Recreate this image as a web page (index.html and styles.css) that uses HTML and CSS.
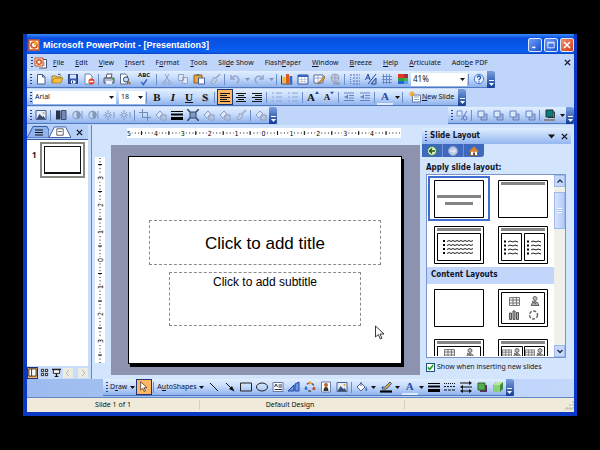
FILE: index.html
```html
<!DOCTYPE html>
<html lang="en">
<head>
<meta charset="utf-8">
<title>Microsoft PowerPoint - [Presentation3]</title>
<link rel="stylesheet" href="styles.css">
</head>
<body>
<svg class="defs" aria-hidden="true">
  <defs>
    <symbol id="new" viewBox="0 0 12 12"><path d="M2.5 1.500h5l2.500 2.500v7h-7.500z" fill="#fff" stroke="#4a5f91"/><path d="M7.500 1.500v2.500h2.500" fill="none" stroke="#4a5f91"/></symbol>
    <symbol id="open" viewBox="0 0 12 12"><path d="M1 10V3h4l1 1h4v2" fill="#f5d778" stroke="#a07a20"/><path d="M1 10l2-5h9l-2.500 5z" fill="#ffbf3d" stroke="#a07a20" stroke-width=".8"/><path d="M7 1.500q2-1 3 1" fill="none" stroke="#345"/></symbol>
    <symbol id="save" viewBox="0 0 12 12"><path d="M1.500 1.500h9v9h-9z" fill="#3b5cad" stroke="#223c80"/><path d="M3 1.500h6v4H3z" fill="#d8e4ff"/><path d="M4 7.500h4.500v3H4z" fill="#fff"/><path d="M5 8h1v2H5z" fill="#223c80"/></symbol>
    <symbol id="perm" viewBox="0 0 12 12"><path d="M2 1h5l2 2v8H2z" fill="#fff" stroke="#7084b0"/><circle cx="8.500" cy="8.500" r="3" fill="#e2401c"/><path d="M6.500 8.500h4" stroke="#fff" stroke-width="1.400"/></symbol>
    <symbol id="print" viewBox="0 0 12 12"><path d="M4 1h5l-1 4H3z" fill="#fff" stroke="#556"/><path d="M1 5h10v5H1z" fill="#b3bdcb" stroke="#4b5366"/><path d="M3 8h6v3H3z" fill="#eef"/><path d="M9 6.500h1.500" stroke="#2b2"/></symbol>
    <symbol id="preview" viewBox="0 0 12 12"><path d="M1.500 1h5l2 2v8h-7z" fill="#fff" stroke="#566a99"/><circle cx="7" cy="6.500" r="2.600" fill="#bfe0ff" stroke="#345"/><path d="M9 8.500l2.500 2.700" stroke="#a06a30" stroke-width="1.800"/></symbol>
    <symbol id="check" viewBox="0 0 12 12"><path d="M2 6l3 4L10.500 2" fill="none" stroke="#2b58c0" stroke-width="1.900"/></symbol>
    <symbol id="cut" viewBox="0 0 12 12"><path d="M4 1l4 7M8 1L4 8" stroke="#93a3c5"/><circle cx="3.500" cy="9.500" r="1.600" fill="none" stroke="#93a3c5"/><circle cx="8.500" cy="9.500" r="1.600" fill="none" stroke="#93a3c5"/></symbol>
    <symbol id="copy" viewBox="0 0 12 12"><path d="M1.500 1.500h5v6h-5zM5.500 4.500h5v6h-5z" fill="#dfe7f5" stroke="#94a4c6"/></symbol>
    <symbol id="paste" viewBox="0 0 12 12"><path d="M1 2h8v8H1z" fill="#e6a93b" stroke="#8a6420"/><path d="M3.500 1h3v2h-3z" fill="#777"/><path d="M5.500 5h6v6h-6z" fill="#fff" stroke="#44609c"/></symbol>
    <symbol id="brush" viewBox="0 0 12 12"><path d="M11 1L7 5" stroke="#95a4c2" stroke-width="1.500"/><path d="M5 4l3 3-4 4-2-1z" fill="#c4cfe2" stroke="#95a4c2"/></symbol>
    <symbol id="undo" viewBox="0 0 12 12"><path d="M2 2v4h4M2.500 5.500q4-5 7 0 1 3-2 5" fill="none" stroke="#93a5cc" stroke-width="1.500"/></symbol>
    <symbol id="redo" viewBox="0 0 12 12"><path d="M10 2v4H6M9.500 5.500q-4-5-7 0-1 3 2 5" fill="none" stroke="#93a5cc" stroke-width="1.500"/></symbol>
    <symbol id="down" viewBox="0 0 5 5"><path d="M0 1h5L2.500 4z" fill="currentColor"/></symbol>
    <symbol id="cap" viewBox="0 0 5 6"><path d="M0 .5h5" stroke="currentColor"/><path d="M0 3h5L2.500 6z" fill="currentColor"/></symbol>
    <symbol id="chart" viewBox="0 0 12 12"><path d="M.5 2.500v8.500h11" fill="none" stroke="#345"/><path d="M1.500 4h3v6.500h-3z" fill="#f0b52d"/><path d="M5 1h3v9.500H5z" fill="#dd5a1d"/><path d="M8.500 3h2.700v7.500H8.500z" fill="#3264c4"/></symbol>
    <symbol id="table" viewBox="0 0 12 12"><path d="M1 2h10v9H1z" fill="#fff" stroke="#334f8d"/><path d="M1 2h10v2H1z" fill="#3465c0"/><path d="M4.500 4v7M7.700 4v7M1 6.500h10M1 8.700h10" stroke="#a9b9dc" stroke-width=".7"/></symbol>
    <symbol id="drawtable" viewBox="0 0 12 12"><path d="M1 2h9v8H1z" fill="#fff" stroke="#566b99"/><path d="M1 5h9M5 2v8" stroke="#98a8cc"/><path d="M11.500 3L6 9l-1 2 2-1 5-5z" fill="#f0a830" stroke="#704d20" stroke-width=".6"/></symbol>
    <symbol id="link" viewBox="0 0 12 12"><circle cx="6" cy="5" r="4" fill="#c1cce0" stroke="#94a3bf"/><path d="M2 5h8M6 1v8" stroke="#94a3bf"/><path d="M4 10.500h7" stroke="#8b99b5" stroke-width="2"/></symbol>
    <symbol id="expand" viewBox="0 0 12 12"><path d="M1 2h10M4 5h7M4 8h7M4 11h7" stroke="#4e6fb7" stroke-dasharray="2 1"/><path d="M1.500 4v7" stroke="#4e6fb7" stroke-dasharray="1 1"/></symbol>
    <symbol id="fmt" viewBox="0 0 12 12"><path d="M.5 7L3 1l2 6M1.500 5h3" fill="none" stroke="#26489a"/><path d="M11 1L3 11" stroke="#26489a"/><path d="M6 11l5-6v6z" fill="#9eb5e0" stroke="#26489a"/></symbol>
    <symbol id="gridi" viewBox="0 0 12 12"><path d="M2.500 1v10M5.500 1v10M8.500 1v10M1 3.500h10M1 6.500h10M1 9.500h10" stroke="#6484c4" stroke-width=".9"/></symbol>
    <symbol id="color" viewBox="0 0 12 12"><path d="M1 1h10v10H1z" fill="#243a70"/><path d="M1 1h6v4H1z" fill="#e5381f"/><path d="M1 5h6v3H1z" fill="#24a33c"/><path d="M1 8h6v3H1z" fill="#2767d8"/><path d="M7 1h4v4H7z" fill="#a32f38"/><path d="M7 5h4v3H7z" fill="#4bb04a"/><path d="M7 8h4v3H7z" fill="#51a3ee"/></symbol>
    <symbol id="help" viewBox="0 0 12 12"><circle cx="6" cy="6" r="4.700" fill="#e5f0ff" stroke="#4878ce"/><path d="M4.300 4.700Q4.500 3 6 3t1.700 1.500Q7.700 5.500 6 6.500v.8M6 8.200v1.200" fill="none" stroke="#2355b8" stroke-width="1.300"/></symbol>
    <symbol id="al" viewBox="0 0 12 12"><path d="M1 2.500h10M1 4.500h7M1 6.500h10M1 8.500h7M1 10.500h10" stroke="#111"/></symbol>
    <symbol id="ac" viewBox="0 0 12 12"><path d="M1 2.500h10M3 4.500h6M1 6.500h10M3 8.500h6M1 10.500h10" stroke="#111"/></symbol>
    <symbol id="ar" viewBox="0 0 12 12"><path d="M1 2.500h10M4 4.500h7M1 6.500h10M4 8.500h7M1 10.500h10" stroke="#111"/></symbol>
    <symbol id="list" viewBox="0 0 12 12"><path d="M1 2h2M1 6h2M1 10h2M5 2h6M5 6h6M5 10h6" stroke="#8da5d4"/></symbol>
    <symbol id="indent" viewBox="0 0 12 12"><path d="M1 2h10M6 4.500h5M6 7h5M1 9.500h10" stroke="#6585c5"/><path d="M5 3.500L1 6l4 2z" fill="#6585c5"/></symbol>
    <symbol id="up" viewBox="0 0 4 4"><path d="M0 3h4L2 0z" fill="#2c4f9f"/></symbol>
    <symbol id="slideadd" viewBox="0 0 12 12"><path d="M3.500 4h8v7h-8z" fill="#fff" stroke="#5c75ad"/><path d="M5 6h5M5 8.500h5" stroke="#8aa"/><path d="M3 0v6M0 3h6M1 1l4 4M5 1L1 5" stroke="#f2a41f"/></symbol>
    <symbol id="pic" viewBox="0 0 12 12"><path d="M1 1.500h10v9H1z" fill="#e4eeff" stroke="#4b628f"/><path d="M1.500 10l3-5 3 3 1-1 2 3z" fill="#3c4f70"/><circle cx="8.500" cy="4" r="1" fill="#e69b2b"/></symbol>
    <symbol id="half" viewBox="0 0 12 12"><path d="M1 1.500h4.500v9H1z" fill="#26324f"/><path d="M6.500 1.500H11v9H6.500z" fill="#778bb5" stroke="#3a4d78"/></symbol>
    <symbol id="contrast" viewBox="0 0 12 12"><circle cx="5.500" cy="6" r="3.800" fill="#c9d6ec" stroke="#8198c0"/><path d="M5.500 2a4 4 0 010 8z" fill="#8198c0"/><path d="M11 2v8" stroke="#8198c0"/></symbol>
    <symbol id="sun" viewBox="0 0 12 12"><circle cx="5" cy="6" r="2" fill="none" stroke="#8198c0"/><path d="M5 1v2M5 9v2M.5 6h2M7 6h2M2 3l1 1M7 8l1 1M8 3L7 4M2 9l1-1M11 3v6" stroke="#8198c0"/></symbol>
    <symbol id="crop" viewBox="0 0 12 12"><path d="M3.500 0v8.500H12M0 3.500h8.500V12" fill="none" stroke="#7188b8"/></symbol>
    <symbol id="shape" viewBox="0 0 12 12"><path d="M1 6l4-4 3 3-4 4z" fill="#dde7f6" stroke="#8c9fc3"/><path d="M6 6h5v5H6z" fill="#b8c7df" stroke="#8c9fc3"/></symbol>
    <symbol id="thick" viewBox="0 0 12 12"><path d="M0 2.500h12" stroke="#000"/><path d="M0 5.500h12" stroke="#000" stroke-width="2"/><path d="M0 9.500h12" stroke="#000" stroke-width="3"/></symbol>
    <symbol id="compress" viewBox="0 0 12 12"><path d="M3 3h6v6H3z" fill="#8298c4" stroke="#33466f"/><path d="M0 0l3 3M12 0L9 3M0 12l3-3M12 12L9 9" stroke="#33466f" stroke-width="1.500"/></symbol>
    <symbol id="anim" viewBox="0 0 12 12"><path d="M1 2h5v5H1z" fill="#dfe9fb" stroke="#7a93c6"/><path d="M11 2L5 11" stroke="#5d7aba"/><circle cx="9" cy="9" r="2" fill="none" stroke="#5d7aba"/></symbol>
    <symbol id="order" viewBox="0 0 12 12"><path d="M5 5h6v6H5z" fill="#9db4de" stroke="#6582bd"/><path d="M2 2h6v6H2z" fill="#dbe7fb" stroke="#6582bd"/></symbol>
    <symbol id="teal" viewBox="0 0 12 12"><path d="M2 1h7v7H2z" fill="#087f7b" stroke="#233"/><path d="M9 3h1.500v5.500H4" fill="none" stroke="#333"/><path d="M0 11h11" stroke="#888" stroke-width="2"/></symbol>
    <symbol id="pointer" viewBox="0 0 12 16"><path d="M1.500 1v11l2.800-2.500 2 4.500 1.700-.8-2-4.200H10z" fill="#fff" stroke="#222" stroke-width=".9"/></symbol>
    <symbol id="line" viewBox="0 0 12 12"><path d="M2 2l8 8" stroke="#111"/></symbol>
    <symbol id="arrow" viewBox="0 0 12 12"><path d="M2 2l6 6" stroke="#111"/><path d="M10.500 10.500L5 8l3-3z" fill="#111"/></symbol>
    <symbol id="rect" viewBox="0 0 12 12"><path d="M.5 2h11v8H.5z" fill="none" stroke="#222"/></symbol>
    <symbol id="oval" viewBox="0 0 12 12"><ellipse cx="6" cy="6" rx="5.500" ry="4" fill="none" stroke="#222"/></symbol>
    <symbol id="tbox" viewBox="0 0 12 12"><path d="M1 1.500h10v9H1z" fill="#fff" stroke="#667ba8"/><path d="M2.500 6L4 3l1.500 3M6.500 4H10M6.500 6H10M2.500 8.500H10" fill="none" stroke="#334"/></symbol>
    <symbol id="wordart" viewBox="0 0 12 12"><path d="M0 10L6 4v6zM7 10V3l4-2v9z" fill="#6d98e8" stroke="#1f479f"/></symbol>
    <symbol id="diagram" viewBox="0 0 12 12"><circle cx="6" cy="6" r="4" fill="none" stroke="#555" stroke-dasharray="3 2" stroke-width="1.400"/><circle cx="6" cy="1.800" r="1.600" fill="#f1a22b"/><circle cx="2" cy="7.500" r="1.500" fill="#3d72d6"/><circle cx="10" cy="7.500" r="1.500" fill="#d14a26"/></symbol>
    <symbol id="clip" viewBox="0 0 12 12"><path d="M1.500 1h9v10h-9z" fill="#fff" stroke="#667ba8"/><circle cx="6" cy="4" r="2" fill="#b76523"/><path d="M3.500 10q0-4 2.500-4t2.500 4z" fill="#333"/></symbol>
    <symbol id="bucket" viewBox="0 0 12 12"><path d="M1 6l4-4 4 4-4 4z" fill="#fff" stroke="#4c6390"/><path d="M5 5V1" stroke="#4c6390"/><path d="M10 5q2 3 1 4.500t-2-.5z" fill="#5478b5"/></symbol>
    <symbol id="pen" viewBox="0 0 12 12"><path d="M2 6q3 1 4-1l4-4 1.500 1.500-4 4.500q-2 2-5 1z" fill="#eaaa36" stroke="#35558f"/><path d="M0 10.500h12" stroke="#000" stroke-width="2.200"/></symbol>
    <symbol id="dash" viewBox="0 0 12 12"><path d="M0 2.500h12" stroke="#111" stroke-dasharray="1 1"/><path d="M0 5.500h12" stroke="#111" stroke-dasharray="2 1"/><path d="M0 9h12" stroke="#111" stroke-dasharray="3 1"/></symbol>
    <symbol id="arrows" viewBox="0 0 12 12"><path d="M0 2h10M2 6h10M1 10h10" stroke="#111"/><path d="M9 0l3 2-3 2zM3 4L0 6l3 2zM3 8l-3 2 3 2zM9 8l3 2-3 2z" fill="#111"/></symbol>
    <symbol id="shadow" viewBox="0 0 12 12"><path d="M4 4h7v7H4z" fill="#536"/><path d="M2 2h7v7H2z" fill="#58ae4f" stroke="#2d672c"/></symbol>
    <symbol id="cube" viewBox="0 0 12 12"><path d="M1 4l3-3h7v7l-3 3H1z" fill="#3c8d3b"/><path d="M1 4h7v7H1z" fill="#8bd078"/><path d="M1 4l3-3h7L8 4z" fill="#bce8a4"/></symbol>
    <symbol id="x" viewBox="0 0 8 8"><path d="M1 1l6 6M7 1L1 7" stroke="currentColor" stroke-width="1.500"/></symbol>
    <symbol id="logo" viewBox="0 0 12 12"><path d="M1 1h10v10H1z" fill="#fff4e9" stroke="#d9541e" stroke-width="1.400"/><circle cx="6" cy="6" r="3" fill="none" stroke="#d9541e" stroke-width="1.700"/><path d="M6 6V2.500A3.500 3.500 0 019.500 6z" fill="#f5a12a"/></symbol>
    <symbol id="docicon" viewBox="0 0 14 12"><path d="M6 2.500h6.500v8.500H5" fill="#fff" stroke="#444f70"/><path d="M10 5v4" stroke="#8a96b5"/><path d="M1 1h8v8H1z" fill="#fff4e9" stroke="#c9481a"/><circle cx="5" cy="5" r="2.300" fill="none" stroke="#d9541e" stroke-width="1.500"/></symbol>

    <symbol id="t-title" viewBox="0 0 50 38"><path d="M.5.500h49v37H.5z" fill="#fff" stroke="#000"/><path d="M3 16.500h44M11 23.500h28" stroke="#858585" stroke-width="3"/></symbol>
    <symbol id="t-only" viewBox="0 0 50 38"><path d="M.5.500h49v37H.5z" fill="#fff" stroke="#000"/><path d="M3 3.500h44" stroke="#858585" stroke-width="3"/></symbol>
    <symbol id="t-blank" viewBox="0 0 50 38"><path d="M.5.500h49v37H.5z" fill="#fff" stroke="#000"/></symbol>
    <symbol id="t-text" viewBox="0 0 50 38"><use href="#t-only"/><path d="M3.500 7.500h43v27h-43z" fill="none" stroke="#000"/><path d="M9 15h2M9 19h2M9 23h2M9 27h2" stroke="#000" stroke-width="2"/><path d="M13 15.500l2-1 2 1 2-1 2 1 2-1 2 1 2-1 2 1 2-1 2 1 2-1 2 1 2-1M13 19.500l2-1 2 1 2-1 2 1 2-1 2 1 2-1 2 1 2-1 2 1 2-1 2 1 2-1M13 23.500l2-1 2 1 2-1 2 1 2-1 2 1 2-1 2 1 2-1 2 1 2-1 2 1 2-1M13 27.500l2-1 2 1 2-1 2 1 2-1 2 1 2-1 2 1 2-1 2 1 2-1 2 1 2-1" fill="none" stroke="#222"/></symbol>
    <symbol id="t-two" viewBox="0 0 50 38"><use href="#t-only"/><path d="M3.500 7.500h20v27h-20zM26.500 7.500h20v27h-20z" fill="none" stroke="#000"/><path d="M6 15.500h2M6 19.500h2M6 23.500h2M6 27.500h2M29 15.500h2M29 19.500h2M29 23.500h2M29 27.500h2" stroke="#000" stroke-width="2"/><path d="M10 16l2-1 3 1 2-1 3 1M10 20l2-1 3 1 2-1 3 1M10 24l2-1 3 1 2-1 3 1M10 28l2-1 3 1 2-1 3 1M33 16l2-1 3 1 2-1 3 1M33 20l2-1 3 1 2-1 3 1M33 24l2-1 3 1 2-1 3 1M33 28l2-1 3 1 2-1 3 1" fill="none" stroke="#222"/></symbol>
    <symbol id="g-table" viewBox="0 0 11 10"><path d="M.5.500h10v8H.5zM.5 3h10M.5 6h10M4 .5v8M7.500.500v8" fill="#f4f4f4" stroke="#777"/></symbol>
    <symbol id="g-man" viewBox="0 0 11 10"><circle cx="6" cy="2.500" r="2" fill="#bbb" stroke="#666"/><path d="M2 9.500q1-4 4-4t4 4z" fill="#aaa" stroke="#666"/><path d="M3 5l4 3" stroke="#555"/></symbol>
    <symbol id="g-bars" viewBox="0 0 11 10"><path d="M.5 3h2v6.500h-2zM4 1h2v8.500H4zM7.500 2.500h2v7h-2z" fill="#aaa" stroke="#555"/></symbol>
    <symbol id="g-ring" viewBox="0 0 11 10"><circle cx="5.500" cy="5" r="4" fill="none" stroke="#666" stroke-width="1.500" stroke-dasharray="3 1.500"/></symbol>
    <symbol id="t-content" viewBox="0 0 50 38"><use href="#t-blank"/><path d="M3.500 3.500h43v31h-43z" fill="none" stroke="#000"/><use href="#g-table" x="11" y="8" width="11" height="10"/><use href="#g-man" x="31" y="7" width="11" height="10"/><use href="#g-bars" x="11" y="21" width="11" height="10"/><use href="#g-ring" x="30" y="21" width="11" height="10"/></symbol>
    <symbol id="t-tcontent" viewBox="0 0 50 38"><use href="#t-only"/><path d="M3.500 7.500h43v27h-43z" fill="none" stroke="#000"/><use href="#g-table" x="10" y="10" width="11" height="10"/><use href="#g-man" x="30" y="9" width="11" height="10"/></symbol>
    <symbol id="t-tcontent2" viewBox="0 0 50 38"><use href="#t-only"/><path d="M3.500 7.500h21v27h-21zM26.500 7.500h20v27h-20z" fill="none" stroke="#000"/><use href="#g-table" x="4" y="10" width="10" height="10"/><use href="#g-man" x="13" y="9" width="11" height="10"/><use href="#g-table" x="27" y="10" width="10" height="10"/><use href="#g-man" x="36" y="9" width="11" height="10"/></symbol>
  </defs>
</svg>

<div class="window">
  <header class="titlebar">
    <svg class="i"><use href="#logo"/></svg>
    <h1>Microsoft PowerPoint - [Presentation3]</h1>
    <button class="winbtn" aria-label="Minimize"><svg viewBox="0 0 10 10"><path d="M1.500 8h4" stroke="#fff" stroke-width="2"/></svg></button>
    <button class="winbtn" aria-label="Restore"><svg viewBox="0 0 10 10"><path d="M1 1.500h8v7H1zM1 2.500h8" fill="none" stroke="#fff"/></svg></button>
    <button class="winbtn close" aria-label="Close"><svg viewBox="0 0 8 8"><use href="#x"/></svg></button>
  </header>

  <nav class="menubar">
    <span class="grip"></span>
    <svg class="doc"><use href="#docicon"/></svg>
    <a href="#"><u>F</u>ile</a><a href="#"><u>E</u>dit</a><a href="#"><u>V</u>iew</a><a href="#"><u>I</u>nsert</a><a href="#">F<u>o</u>rmat</a><a href="#"><u>T</u>ools</a><a href="#">Sli<u>d</u>e Show</a><a href="#">Flash<u>P</u>aper</a><a href="#"><u>W</u>indow</a><a href="#"><u>B</u>reeze</a><a href="#"><u>H</u>elp</a><a href="#"><u>A</u>rticulate</a><a href="#">Ado<u>b</u>e PDF</a>
    <button class="mdi" aria-label="Close presentation"><svg class="x"><use href="#x"/></svg></button>
  </nav>

  <div class="row">
    <div class="toolbar">
      <span class="grip"></span>
      <button class="b" aria-label="New"><svg class="i"><use href="#new"/></svg></button>
      <button class="b" aria-label="Open"><svg class="i"><use href="#open"/></svg></button>
      <button class="b" aria-label="Save"><svg class="i"><use href="#save"/></svg></button>
      <button class="b" aria-label="Permission"><svg class="i"><use href="#perm"/></svg></button>
      <span class="sep"></span>
      <button class="b" aria-label="Print"><svg class="i"><use href="#print"/></svg></button>
      <button class="b" aria-label="Print Preview"><svg class="i"><use href="#preview"/></svg></button>
      <button class="b spell" aria-label="Spelling"><span>ABC</span><svg class="i"><use href="#check"/></svg></button>
      <span class="sep"></span>
      <button class="b" aria-label="Cut"><svg class="i"><use href="#cut"/></svg></button>
      <button class="b" aria-label="Copy"><svg class="i"><use href="#copy"/></svg></button>
      <button class="b" aria-label="Paste"><svg class="i"><use href="#paste"/></svg></button>
      <button class="b" aria-label="Format Painter"><svg class="i"><use href="#brush"/></svg></button>
      <span class="sep"></span>
      <button class="b" aria-label="Undo"><svg class="i"><use href="#undo"/></svg></button>
      <button class="d off" aria-label="Undo list"><svg><use href="#down"/></svg></button>
      <button class="b" aria-label="Redo"><svg class="i"><use href="#redo"/></svg></button>
      <button class="d off" aria-label="Redo list"><svg><use href="#down"/></svg></button>
      <span class="sep"></span>
      <button class="b" aria-label="Chart"><svg class="i"><use href="#chart"/></svg></button>
      <button class="b" aria-label="Table"><svg class="i"><use href="#table"/></svg></button>
      <button class="b" aria-label="Draw Table"><svg class="i"><use href="#drawtable"/></svg></button>
      <button class="b" aria-label="Hyperlink"><svg class="i"><use href="#link"/></svg></button>
      <span class="sep"></span>
      <button class="b" aria-label="Expand All"><svg class="i"><use href="#expand"/></svg></button>
      <button class="b" aria-label="Show Formatting"><svg class="i"><use href="#fmt"/></svg></button>
      <button class="b" aria-label="Grid"><svg class="i"><use href="#gridi"/></svg></button>
      <button class="b" aria-label="Color"><svg class="i"><use href="#color"/></svg></button>
      <span class="combo zoom"><select aria-label="Zoom"><option>41%</option></select><svg><use href="#down"/></svg></span>
      <span class="sep"></span>
      <button class="b" aria-label="Help"><svg class="i"><use href="#help"/></svg></button>
      <button class="cap" aria-label="Toolbar Options"><svg><use href="#cap"/></svg></button>
    </div>
  </div>

  <div class="row">
    <div class="toolbar">
      <span class="grip"></span>
      <span class="combo font"><select aria-label="Font"><option>Arial</option></select><svg><use href="#down"/></svg></span>
      <span class="combo size"><select aria-label="Font Size"><option>18</option></select><svg><use href="#down"/></svg></span>
      <span class="sep"></span>
      <button class="b ch">B</button><button class="b ch it">I</button><button class="b ch un">U</button><button class="b ch sh">S</button>
      <span class="sep"></span>
      <button class="b on" aria-label="Align Left"><svg class="i"><use href="#al"/></svg></button>
      <button class="b" aria-label="Center"><svg class="i"><use href="#ac"/></svg></button>
      <button class="b" aria-label="Align Right"><svg class="i"><use href="#ar"/></svg></button>
      <span class="sep"></span>
      <button class="b" aria-label="Numbering"><svg class="i"><use href="#list"/></svg></button>
      <button class="b" aria-label="Bullets"><svg class="i"><use href="#list"/></svg></button>
      <span class="sep"></span>
      <button class="b ch">A<svg class="mark"><use href="#up"/></svg></button>
      <button class="b ch small">A<svg class="mark"><use href="#down"/></svg></button>
      <span class="sep"></span>
      <button class="b" aria-label="Decrease Indent"><svg class="i"><use href="#indent"/></svg></button>
      <button class="b" aria-label="Increase Indent"><svg class="i"><use href="#indent"/></svg></button>
      <span class="sep"></span>
      <button class="b ch fc">A</button>
      <button class="d" aria-label="Font colors"><svg><use href="#down"/></svg></button>
      <span class="sep"></span>
      <button class="textbtn wide"><svg class="i"><use href="#slideadd"/></svg><span><u>N</u>ew Slide</span></button>
      <button class="cap" aria-label="Toolbar Options"><svg><use href="#cap"/></svg></button>
    </div>
  </div>

  <div class="row">
    <div class="toolbar">
      <span class="grip"></span>
      <button class="b" aria-label="Insert Picture"><svg class="i"><use href="#pic"/></svg></button>
      <span class="sep"></span>
      <button class="b" aria-label="Picture Color"><svg class="i"><use href="#half"/></svg></button>
      <button class="b" aria-label="More Contrast"><svg class="i"><use href="#contrast"/></svg></button>
      <button class="b" aria-label="Less Contrast"><svg class="i"><use href="#contrast"/></svg></button>
      <button class="b" aria-label="More Brightness"><svg class="i"><use href="#sun"/></svg></button>
      <button class="b" aria-label="Less Brightness"><svg class="i"><use href="#sun"/></svg></button>
      <span class="sep"></span>
      <button class="b" aria-label="Crop"><svg class="i"><use href="#crop"/></svg></button>
      <button class="b" aria-label="Rotate Left"><svg class="i"><use href="#shape"/></svg></button>
      <button class="b" aria-label="Line Style"><svg class="i"><use href="#thick"/></svg></button>
      <button class="b" aria-label="Compress Pictures"><svg class="i"><use href="#compress"/></svg></button>
      <button class="b" aria-label="Recolor Picture"><svg class="i"><use href="#shape"/></svg></button>
      <button class="b" aria-label="Format Picture"><svg class="i"><use href="#shape"/></svg></button>
      <button class="b" aria-label="Set Transparent Color"><svg class="i"><use href="#brush"/></svg></button>
      <span class="sep"></span>
      <button class="b" aria-label="Reset Picture"><svg class="i"><use href="#shape"/></svg></button>
      <button class="cap" aria-label="Toolbar Options"><svg><use href="#cap"/></svg></button>
    </div>
    <div class="toolbar right">
      <span class="grip"></span>
      <button class="b" aria-label="Animate"><svg class="i"><use href="#anim"/></svg></button>
      <span class="sep"></span>
      <button class="b" aria-label="Bring to Front"><svg class="i"><use href="#order"/></svg></button>
      <button class="b" aria-label="Send to Back"><svg class="i"><use href="#order"/></svg></button>
      <button class="b" aria-label="Bring Forward"><svg class="i"><use href="#order"/></svg></button>
      <button class="b" aria-label="Send Backward"><svg class="i"><use href="#order"/></svg></button>
      <span class="sep"></span>
      <button class="b" aria-label="Shadow Color"><svg class="i"><use href="#teal"/></svg></button>
      <button class="d" aria-label="Shadow colors"><svg><use href="#down"/></svg></button>
      <button class="cap" aria-label="Toolbar Options"><svg><use href="#cap"/></svg></button>
    </div>
  </div>

  <main class="work">
    <section class="outline">
      <div class="tabs">
        <button class="tab" aria-label="Outline"><svg viewBox="0 0 22 12"><path d="M0 12L6 .5h14l2 4V12z" fill="#91b4ee" stroke="#35599f"/><path d="M8 4h8M8 6.500h8M8 9h8" stroke="#111"/></svg></button>
        <button class="tab" aria-label="Slides"><svg viewBox="0 0 24 12"><path d="M0 12L6 .5h12L24 12z" fill="#fff" stroke="#35599f"/><path d="M8.500 2.500h7v7h-7zM10 5.500h4" fill="#fff" stroke="#555"/></svg></button>
        <button class="tabx" aria-label="Close"><svg class="x"><use href="#x"/></svg></button>
      </div>
      <div class="slides"><b>1</b><button class="mini" aria-label="Slide 1"><span></span></button></div>
      <div class="views">
        <button class="v on" aria-label="Normal View"><svg viewBox="0 0 10 10"><path d="M1 1h8v8H1zM4 1v8" fill="#fff" stroke="#222"/></svg></button>
        <button class="v" aria-label="Slide Sorter View"><svg viewBox="0 0 10 10"><path d="M1.500 1.500h2.500v2.500H1.500zM6 1.500h2.500v2.500H6zM1.500 6h2.500v2.500H1.500zM6 6h2.500v2.500H6z" fill="#fff" stroke="#111"/></svg></button>
        <button class="v" aria-label="Slide Show"><svg viewBox="0 0 10 10"><path d="M0 1.500h10M5 6v3M3 9.500h4" stroke="#111" stroke-width="1.400"/><path d="M1.500 2h7v4h-7z" fill="#fff" stroke="#111"/></svg></button>
        <button class="hs" aria-label="Scroll left"><svg viewBox="0 0 8 8"><path d="M5 1L2 4l3 3" fill="none" stroke="#b9b9ae"/></svg></button>
        <button class="hs end" aria-label="Scroll right"><svg viewBox="0 0 8 8"><path d="M3 1l3 3-3 3" fill="none" stroke="#b9b9ae"/></svg></button>
      </div>
    </section>

    <section class="editor">
      <svg class="hruler" viewBox="0 0 275 10" preserveAspectRatio="none">
        <path d="M4.500 5H274" stroke="#111" stroke-dasharray="1 2.400"/>
        <path d="M14.500 3v4M42 3v4M69 3v4M96.500 3v4M123.500 3v4M151 3v4M178 3v4M205.500 3v4M232.500 3v4M260 3v4" stroke="#111"/>
        <g class="num"><text x="2" y="8">5</text><text x="29" y="8">4</text><text x="56" y="8">3</text><text x="83" y="8">2</text><text x="110" y="8">1</text><text x="137" y="8">0</text><text x="165" y="8">1</text><text x="192" y="8">2</text><text x="219" y="8">3</text><text x="246" y="8">4</text></g>
      </svg>
      <svg class="vruler" viewBox="0 0 10 206" preserveAspectRatio="none">
        <path d="M5 1V206" stroke="#111" stroke-dasharray="1 2.400"/>
        <path d="M3 7.500h4M3 34.500h4M3 62h4M3 89h4M3 116.500h4M3 144h4M3 171h4M3 198h4" stroke="#111"/>
        <g class="num"><text transform="translate(8 21) rotate(-90)">3</text><text transform="translate(8 48) rotate(-90)">2</text><text transform="translate(8 75) rotate(-90)">1</text><text transform="translate(8 103) rotate(-90)">0</text><text transform="translate(8 130) rotate(-90)">1</text><text transform="translate(8 157) rotate(-90)">2</text><text transform="translate(8 184) rotate(-90)">3</text></g>
      </svg>
      <div class="stage">
        <article class="slide">
          <h2>Click to add title</h2>
          <p>Click to add subtitle</p>
          <svg class="cursor"><use href="#pointer"/></svg>
        </article>
      </div>
    </section>

    <aside class="pane">
      <div class="panehead"><span class="grip"></span><h3>Slide Layout</h3><button class="d" aria-label="Other Task Panes"><svg><use href="#down"/></svg></button><button class="d" aria-label="Close"><svg><use href="#x"/></svg></button></div>
      <div class="panenav">
        <button aria-label="Back"><svg viewBox="0 0 10 10"><circle cx="5" cy="5" r="4.500" fill="#dcefc8" stroke="#384"/><path d="M8 5H3M5 2.500L2.500 5 5 7.500" fill="none" stroke="#252"  stroke-width="1.300"/></svg></button>
        <button aria-label="Forward"><svg viewBox="0 0 10 10"><circle cx="5" cy="5" r="4.500" fill="#b9c8e4" stroke="#8fa5cf"/><path d="M2 5h5M5 2.500L7.500 5 5 7.500" fill="none" stroke="#f2f6ff"/></svg></button>
        <button aria-label="Home"><svg viewBox="0 0 10 10"><path d="M1.500 5h7v4.500h-7z" fill="#fff" stroke="#864"/><path d="M0 5.500L5 .5l5 5z" fill="#e0852e"/><path d="M4 6.500h2v3H4z" fill="#753"/></svg></button>
      </div>
      <h4>Apply slide layout:</h4>
      <div class="listbox">
        <div class="layouts">
          <button class="lay sel" aria-label="Title Slide"><svg><use href="#t-title"/></svg></button>
          <button class="lay" aria-label="Title Only"><svg><use href="#t-only"/></svg></button>
          <button class="lay" aria-label="Title and Text"><svg><use href="#t-text"/></svg></button>
          <button class="lay" aria-label="Title and 2-Column Text"><svg><use href="#t-two"/></svg></button>
          <h5>Content Layouts</h5>
          <button class="lay" aria-label="Blank"><svg><use href="#t-blank"/></svg></button>
          <button class="lay" aria-label="Content"><svg><use href="#t-content"/></svg></button>
          <button class="lay" aria-label="Title and Content"><svg><use href="#t-tcontent"/></svg></button>
          <button class="lay" aria-label="Title and 2 Content"><svg><use href="#t-tcontent2"/></svg></button>
        </div>
        <div class="scroll">
          <button aria-label="Scroll up"><svg viewBox="0 0 8 8"><path d="M1.500 5.500L4 3l2.500 2.500" fill="none" stroke="#234" stroke-width="1.400"/></svg></button>
          <span class="thumb"></span>
          <button class="dn" aria-label="Scroll down"><svg viewBox="0 0 8 8"><path d="M1.500 3L4 5.500 6.500 3" fill="none" stroke="#234" stroke-width="1.400"/></svg></button>
        </div>
      </div>
      <label class="show"><input type="checkbox" checked><span>Show when inserting new slides</span></label>
    </aside>
  </main>

  <div class="row drawrow">
    <div class="toolbar">
      <span class="grip"></span>
      <button class="textbtn"><span>D<u>r</u>aw</span></button>
      <button class="d" aria-label="Draw menu"><svg><use href="#down"/></svg></button>
      <button class="b on" aria-label="Select Objects"><svg class="i"><use href="#pointer"/></svg></button>
      <span class="sep"></span>
      <button class="textbtn"><span>A<u>u</u>toShapes</span></button>
      <button class="d" aria-label="AutoShapes menu"><svg><use href="#down"/></svg></button>
      <button class="b" aria-label="Line"><svg class="i"><use href="#line"/></svg></button>
      <button class="b" aria-label="Arrow"><svg class="i"><use href="#arrow"/></svg></button>
      <button class="b" aria-label="Rectangle"><svg class="i"><use href="#rect"/></svg></button>
      <button class="b" aria-label="Oval"><svg class="i"><use href="#oval"/></svg></button>
      <button class="b" aria-label="Text Box"><svg class="i"><use href="#tbox"/></svg></button>
      <button class="b" aria-label="WordArt"><svg class="i"><use href="#wordart"/></svg></button>
      <button class="b" aria-label="Diagram"><svg class="i"><use href="#diagram"/></svg></button>
      <button class="b" aria-label="Clip Art"><svg class="i"><use href="#clip"/></svg></button>
      <button class="b" aria-label="Picture"><svg class="i"><use href="#pic"/></svg></button>
      <span class="sep"></span>
      <button class="b" aria-label="Fill Color"><svg class="i"><use href="#bucket"/></svg></button>
      <button class="d" aria-label="Fill colors"><svg><use href="#down"/></svg></button>
      <button class="b" aria-label="Line Color"><svg class="i"><use href="#pen"/></svg></button>
      <button class="d" aria-label="Line colors"><svg><use href="#down"/></svg></button>
      <button class="b ch fc">A</button>
      <button class="d" aria-label="Font colors"><svg><use href="#down"/></svg></button>
      <button class="b" aria-label="Line Style"><svg class="i"><use href="#thick"/></svg></button>
      <button class="b" aria-label="Dash Style"><svg class="i"><use href="#dash"/></svg></button>
      <button class="b" aria-label="Arrow Style"><svg class="i"><use href="#arrows"/></svg></button>
      <button class="b" aria-label="Shadow Style"><svg class="i"><use href="#shadow"/></svg></button>
      <button class="b" aria-label="3-D Style"><svg class="i"><use href="#cube"/></svg></button>
      <button class="cap" aria-label="Toolbar Options"><svg><use href="#cap"/></svg></button>
    </div>
  </div>

  <footer class="status"><span>Slide 1 of 1</span><span>Default Design</span><span></span><svg class="grow" viewBox="0 0 10 10"><path d="M9 1v8H1M6 4v5M3 7v2" fill="none" stroke="#b5b19c" stroke-dasharray="2 1"/></svg></footer>
</div>
</body>
</html>
```
FILE: styles.css
```css
* { box-sizing: border-box; }
body {
  margin: 0;
  min-height: 100vh;
  padding: 34px 23px;
  display: flex;
  background: #000;
  color: #101428;
  font: 7px/10px "Noto Sans", "DejaVu Sans Condensed", sans-serif;
}
.defs { position: absolute; width: 0; height: 0; }
h1, h2, h3, h4, h5, p { margin: 0; font-size: inherit; }
h3, h4, h5 { font-family: "DejaVu Sans Condensed", "DejaVu Sans", sans-serif; font-size: 8px; }
button { padding: 0; border: 0; background: none; color: inherit; font: inherit; display: flex; align-items: center; justify-content: center; flex: none; }
svg { display: block; flex: none; }
a { color: inherit; text-decoration: none; }
u { text-underline-offset: 1px; }
.i { width: 12px; height: 12px; }
.x { width: 7px; height: 7px; }

.window {
  flex: 1;
  min-width: 0;
  display: flex;
  flex-direction: column;
  border: solid #0838c4;
  border-width: 0 3px 4px 4px;
  background: #bfd5fa;
}

.titlebar {
  height: 20px;
  display: flex;
  align-items: center;
  gap: 2px;
  padding: 2px 0 0 1px;
  background: linear-gradient(#3a8cff 0, #0a50e0 4px, #0657e8 12px, #0a62f5 18px, #0a40c0 20px);
  color: #fff;
}
.titlebar h1 { flex: 1; margin-left: 1px; font: bold 9px/12px "Liberation Sans", Arial, sans-serif; }
.winbtn { width: 14px; height: 14px; border: 1px solid #dbe8ff; border-radius: 2px; background: linear-gradient(135deg, #6f9df5, #1a4fd0); }
.winbtn svg { width: 8px; height: 8px; }
.close { background: linear-gradient(135deg, #f09070, #d03c14); }

.menubar { height: 17px; display: flex; align-items: center; gap: 11px; padding: 0 3px; }
.menubar .grip { margin: 0 -10px 0 1px; }
.doc { width: 14px; height: 12px; margin-right: -6px; }
.mdi { margin-left: auto; }

.grip { width: 2px; height: 11px; flex: none; margin: 0 1px 0 3px; background: repeating-linear-gradient(#27418a 0 1px, transparent 1px 3px); }
.row { height: 18px; display: flex; flex: none; }
.toolbar {
  height: 17px;
  display: flex;
  align-items: center;
  border-bottom: 1px solid #4f78bf;
  background: linear-gradient(#e2eeff, #c6dbfc 45%, #8fb2ec);
}
.right { margin-left: auto; }
.b { width: 16px; height: 16px; }
.d { width: 8px; height: 16px; color: #111; }
.d svg, .combo svg { width: 5px; height: 5px; }
.cap svg { width: 5px; height: 6px; }
.off { color: #8193b8; }
.on { border: 1px solid #1c3370; background: #ffb765; }
.sep { width: 4px; height: 11px; flex: none; background: linear-gradient(#6c8ecb, #6c8ecb) 1px 0 / 1px 100% no-repeat; }
.cap { width: 8px; height: 17px; align-items: flex-end; padding-bottom: 2px; color: #fff; background: linear-gradient(#7ba0df, #123c94); border-radius: 0 2px 2px 0; }
.spell { width: 22px; flex-direction: column; }
.spell span { font-size: 6px; line-height: 6px; font-weight: bold; }
.spell .i { height: 8px; }
.ch { font: bold 11px/14px "Liberation Serif", serif; color: #111; }
.it { font-style: italic; }
.un { text-decoration: underline; }
.sh { text-shadow: 1px 1px #99a; }
.small { font-size: 9px; }
.mark { width: 4px; height: 4px; align-self: flex-start; margin-top: 2px; color: #2c4f9f; }
.fc { color: #274b9f; border-bottom: 2px solid #dfeaff; }
.textbtn { gap: 1px; padding: 0 1px; }
.wide { padding: 0 4px; }

.combo { height: 13px; display: flex; align-items: center; padding-right: 2px; background: #fff; }
.combo select { flex: 1; min-width: 0; height: 13px; padding: 0 2px; border: 0; appearance: none; background: none; color: inherit; font: inherit; }
.zoom { width: 56px; }
.zoom select { font-size: 8px; }
.font { width: 83px; }
.size { width: 26px; margin-left: 3px; }

.work { flex: 1; min-height: 0; display: grid; grid-template-columns: 65px 1fr 153px; background: #d3e5fd; }

.outline { display: flex; flex-direction: column; border-right: 1px solid #5f87cc; background: #c9ddfb; padding-right: 3px; }
.tabs { height: 15px; display: flex; align-items: flex-end; padding-bottom: 1px; border-bottom: 1px solid #35599f; background: #b5cff8; }
.tab svg { height: 12px; width: 22px; }
.tabx { flex: 1; height: 12px; }
.slides { flex: 1; display: flex; align-items: flex-start; gap: 4px; padding: 2px 3px 0 5px; background: #fff; }
.slides b { width: 4px; padding-top: 8px; font-size: 8px; }
.mini { flex: 1; height: 36px; padding: 2px; border: 2px solid #85877f; }
.mini span { align-self: stretch; flex: 1; border: 1px solid #111; border-bottom-width: 2px; }
.views { height: 13px; display: flex; align-items: center; gap: 1px; }
.v { width: 11px; height: 12px; }
.v svg { width: 9px; height: 9px; }
.hs { width: 10px; height: 10px; background: #ecebe2; }
.hs svg { width: 8px; height: 8px; }
.end { margin-left: auto; }

.editor { min-width: 0; display: grid; grid-template: 20px 1fr / 19px 1fr; padding: 0 1px 4px 0; }
.hruler { grid-column: 2; width: calc(100% - 35px); height: 10px; margin: 3px 0 0 16px; background: #fff; }
.vruler { width: 10px; height: calc(100% - 24px); margin: 12px 0 0 3px; background: #fff; }
.num { font: 7px "DejaVu Sans Condensed", sans-serif; text-anchor: middle; paint-order: stroke; stroke: #fff; stroke-width: 3px; }
.stage { display: flex; padding: 11px 18px 11px 17px; background: #8d92ae; }
.slide { position: relative; flex: 1; padding: 63px 20px 0; border: 1px solid #000; background: #fff; box-shadow: 2px 3px #000; color: #000; text-align: center; font-family: "Liberation Sans", Arial, sans-serif; }
.slide h2, .slide p { border: 1px dashed #8a8a8a; }
.slide h2 { height: 45px; font-weight: normal; font-size: 17px; line-height: 45px; }
.slide p { height: 54px; margin: 7px 20px 0; font-size: 12px; line-height: 18px; }
.cursor { position: absolute; right: 15px; bottom: 22px; width: 12px; height: 16px; }

.pane { display: flex; flex-direction: column; padding: 3px 3px 0 1px; background: #d3e5fd; }
.panehead { height: 16px; display: flex; align-items: center; background: linear-gradient(#e0edff, #94b7f0); }
.panehead h3 { flex: 1; padding-left: 2px; }
.panehead .d { width: 13px; }
.panehead .d svg { width: 7px; height: 7px; }
.panenav { width: 62px; height: 13px; display: flex; background: #3e69bd; border-radius: 0 0 3px 0; }
.panenav button { flex: 1; border-right: 1px solid #6e92d6; }
.panenav button:last-child { border: 0; }
.panenav svg { width: 10px; height: 10px; }
.pane h4 { padding: 6px 0 1px 4px; }
.listbox { flex: 1; min-height: 0; display: flex; margin: 0 5px 0 4px; border: 1px solid #7a96c8; background: #fff; }
.layouts { flex: 1; min-width: 0; height: 181px; overflow: hidden; display: grid; grid-template-columns: 64px 64px; grid-template-rows: 46px 46px 17px 50px 46px; }
.lay { margin: 1px; height: 45px; }
.lay svg { width: 50px; height: 38px; }
.sel { border: 2px solid #3f6dd0; }
.layouts h5 { grid-column: 1 / -1; padding-left: 4px; line-height: 16px; background: #c1d6fa; }
.scroll { width: 11px; display: flex; flex-direction: column; background: #f0f0ea; }
.scroll button { height: 12px; background: #c5d8fb; border: 1px solid #9fb9ec; }
.scroll svg { width: 8px; height: 8px; }
.thumb { height: 37px; margin-top: 5px; border: 1px solid #9fb9ec; background: repeating-linear-gradient(#fff 0 1px, #9fb9ec 1px 2px) center / 5px 5px no-repeat, linear-gradient(90deg, #d6e3fd, #b4ccf8); }
.dn { margin-top: auto; }
.show { display: flex; align-items: center; gap: 2px; padding: 4px 0 7px 4px; }
.show input { appearance: none; width: 9px; height: 9px; margin: 0; border: 1px solid #1c5180; background: #fff; }
.show input:checked::before { content: ""; display: block; height: 7px; background: #21a121; clip-path: polygon(10% 40%, 40% 65%, 90% 5%, 90% 40%, 40% 100%, 10% 75%); }

.drawrow { padding-left: 76px; background: linear-gradient(90deg, #9dbbef, #c3d8fb); }
.status { height: 15px; display: grid; grid-template-columns: 173px 205px 1fr 10px; align-items: center; background: #efead9; border-top: 1px solid #6287c9; color: #111; }
.status span { text-align: center; border-right: 1px solid #d8d2bd; }
.status span:nth-child(2) { padding-right: 24px; }
.grow { width: 10px; height: 10px; }
```
